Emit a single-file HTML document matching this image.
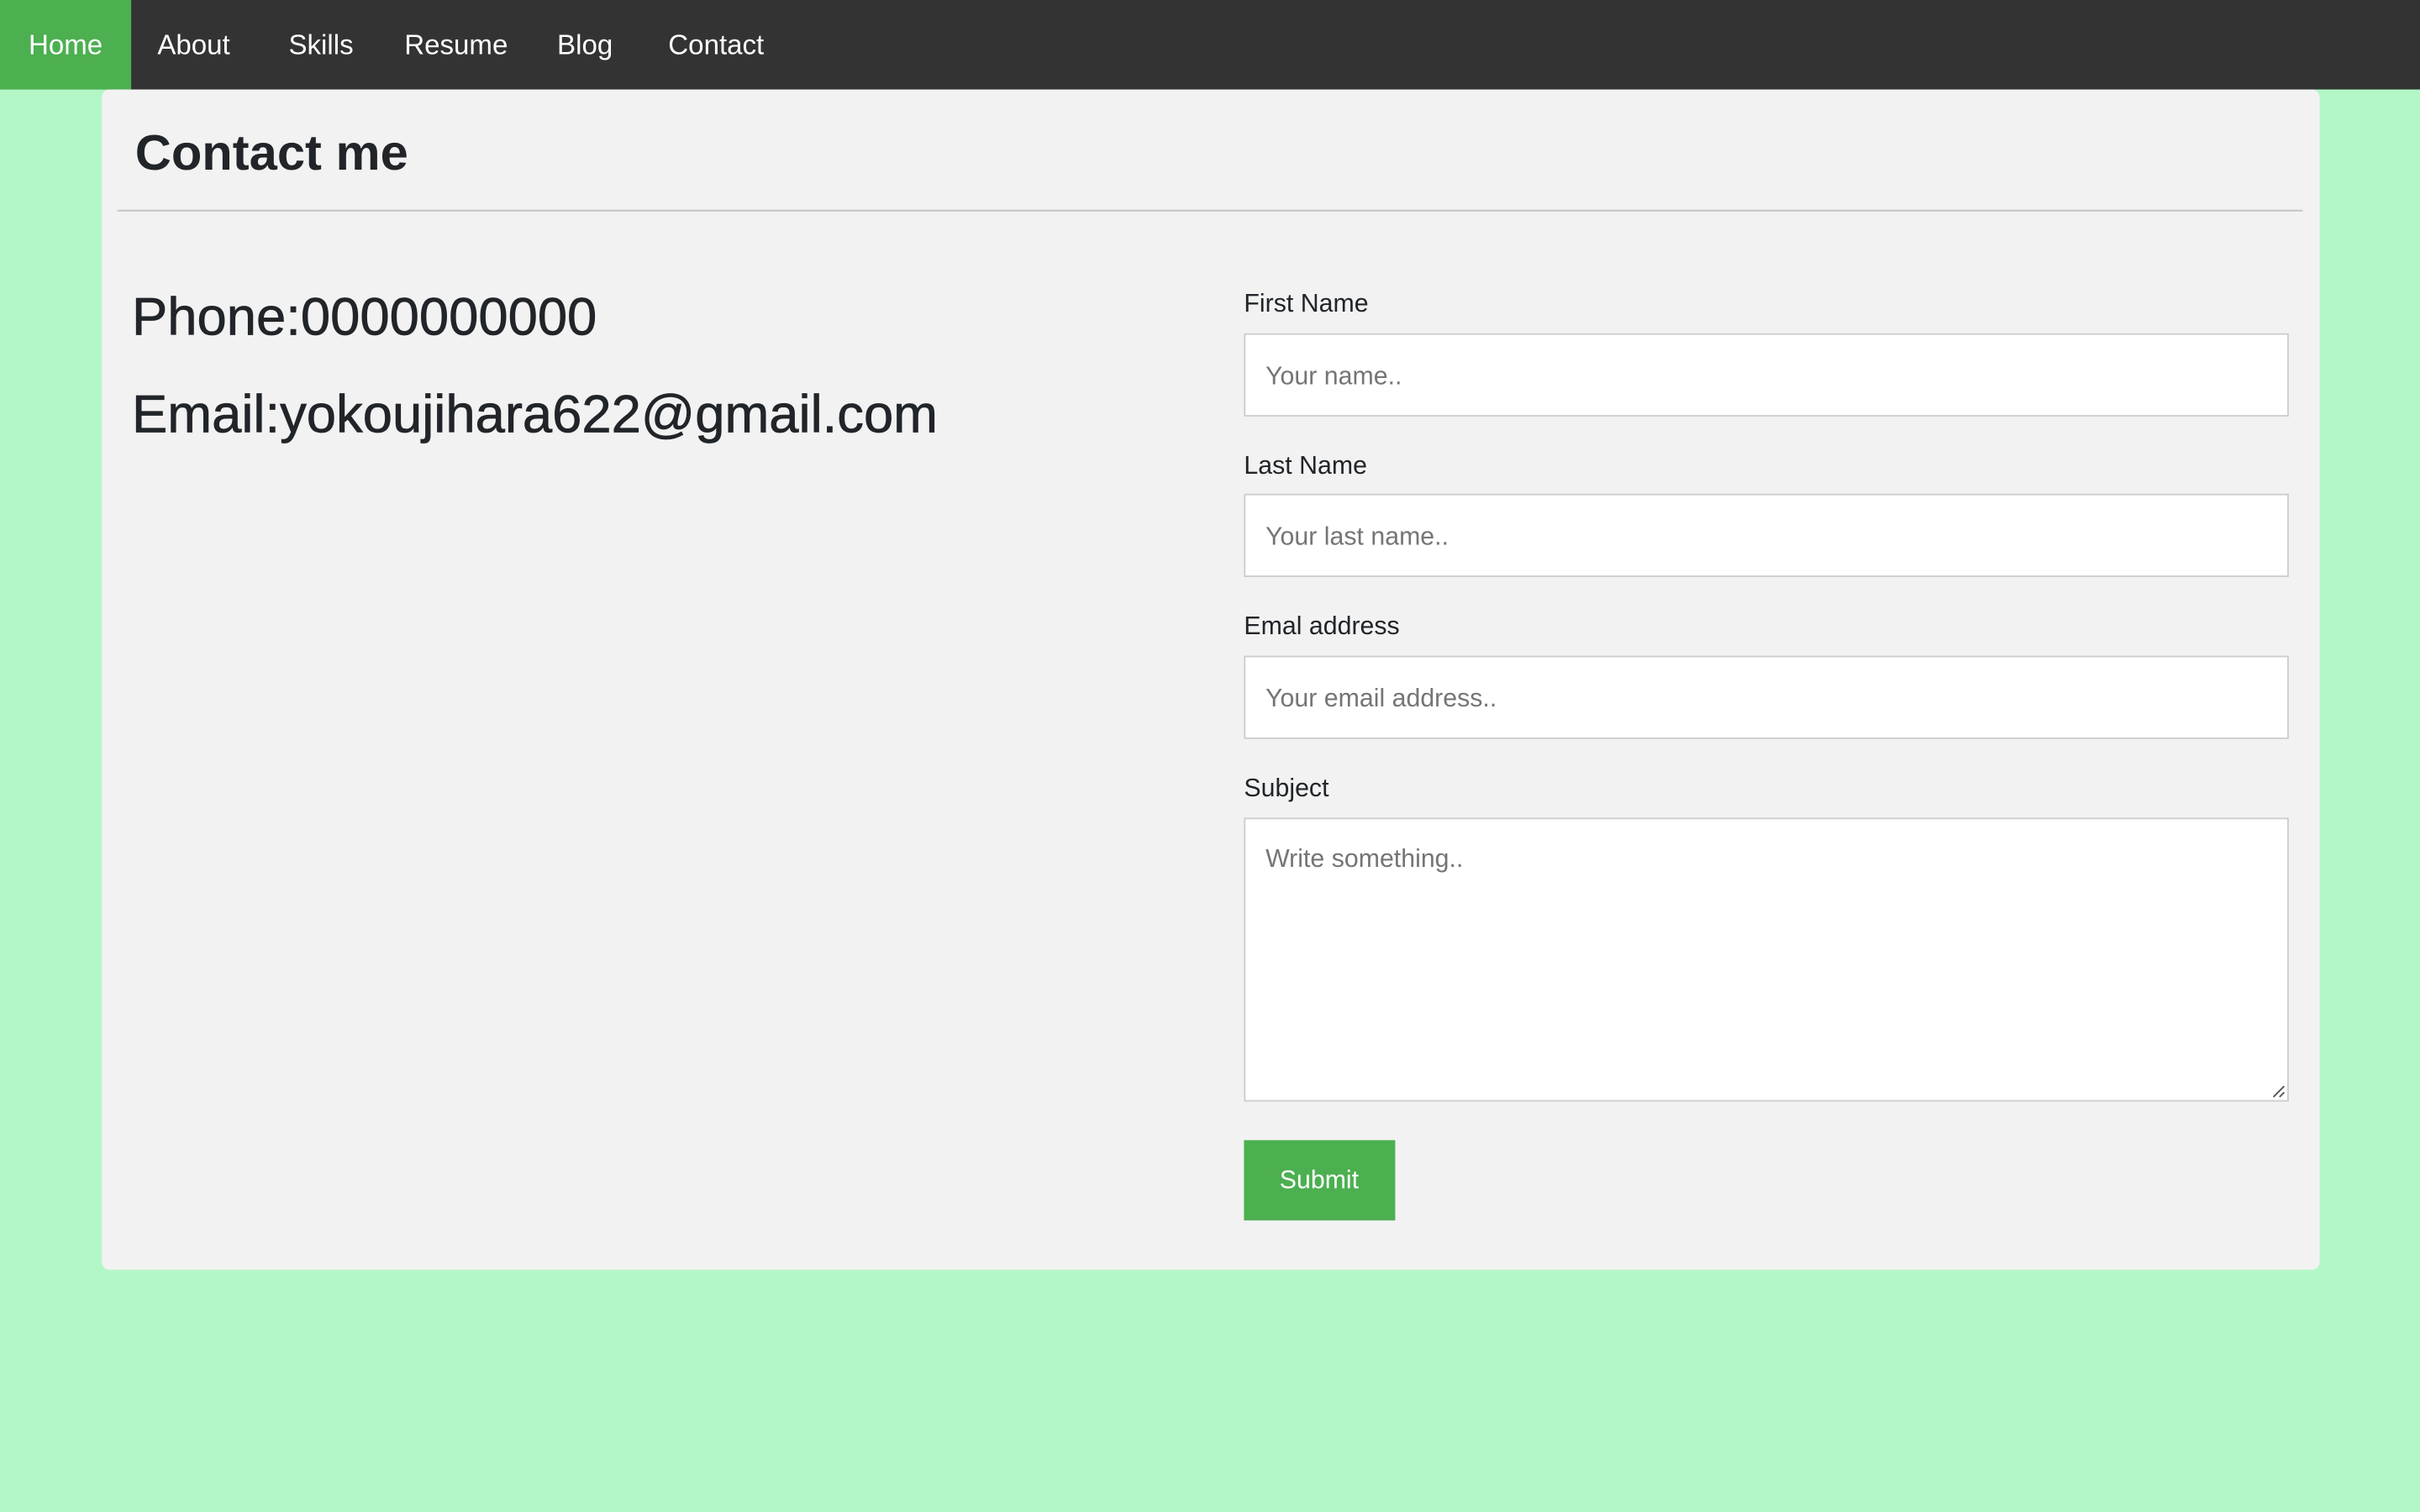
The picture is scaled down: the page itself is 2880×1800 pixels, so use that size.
<!DOCTYPE html>
<html><head><meta charset="utf-8"><style>
html,body{margin:0;padding:0;width:2880px;height:1800px;overflow:hidden;background:#b3f7c6;}
#w{position:absolute;left:0;top:0;width:1568px;height:980px;transform:scale(1.836735);transform-origin:0 0;font-family:"Liberation Sans",sans-serif;}
.nav{position:absolute;left:0;top:0;width:1568px;height:57.7px;background:#333;}
.nav span{position:absolute;top:0;height:57.7px;line-height:59px;color:#fff;font-size:18px;}
.home{left:0;width:85px;background:#4caf50;text-align:center;}
.card{position:absolute;left:65.5px;top:57.7px;width:1437px;height:765px;background:#f2f2f2;border-radius:5px;}
.a{position:absolute;white-space:nowrap;}
h1{position:absolute;margin:0;left:22px;top:23px;font-size:32.5px;font-weight:bold;color:#212529;font-family:"Liberation Sans",sans-serif;}
.hr{position:absolute;left:10.5px;top:78px;width:1416px;height:1.2px;background:#c0c0c0;}
.big{font-size:34.5px;color:#212529;-webkit-text-stroke:0.4px #212529;}
.lbl{font-size:16.5px;color:#212529;}
.in{position:absolute;left:740.5px;width:677px;background:#fff;border:1px solid #ccc;box-sizing:border-box;}
.ph{position:absolute;left:13px;font-size:16.5px;color:#757575;white-space:nowrap;}
.btn{position:absolute;left:740.5px;top:681px;width:97.5px;height:52px;background:#4caf50;color:#fff;font-size:16.5px;text-align:center;line-height:52px;}
</style></head><body><div id="w">
<div class="nav">
<span class="home">Home</span>
<span style="left:102px">About</span>
<span style="left:187px">Skills</span>
<span style="left:262px">Resume</span>
<span style="left:361px">Blog</span>
<span style="left:433px">Contact</span>
</div>
<div class="card">
<h1>Contact me</h1>
<div class="hr"></div>
<div class="a big" style="left:20px;top:129px">Phone:0000000000</div>
<div class="a big" style="left:20px;top:192px">Email:yokoujihara622@gmail.com</div>
<div class="a lbl" style="left:740.5px;top:130px">First Name</div>
<div class="in" style="top:158px;height:54px"><span class="ph" style="top:18px">Your name..</span></div>
<div class="a lbl" style="left:740.5px;top:235px">Last Name</div>
<div class="in" style="top:262.5px;height:54px"><span class="ph" style="top:18px">Your last name..</span></div>
<div class="a lbl" style="left:740.5px;top:339px">Emal address</div>
<div class="in" style="top:367px;height:54px"><span class="ph" style="top:18px">Your email address..</span></div>
<div class="a lbl" style="left:740.5px;top:444px">Subject</div>
<div class="in" style="top:472px;height:184px"><span class="ph" style="top:17px">Write something..</span>
<svg style="position:absolute;right:1px;bottom:1px" width="10" height="10"><path d="M9 2L2 9M9 6L6 9" stroke="#555" stroke-width="1"/></svg></div>
<div class="btn">Submit</div>
</div>
</div></body></html>
